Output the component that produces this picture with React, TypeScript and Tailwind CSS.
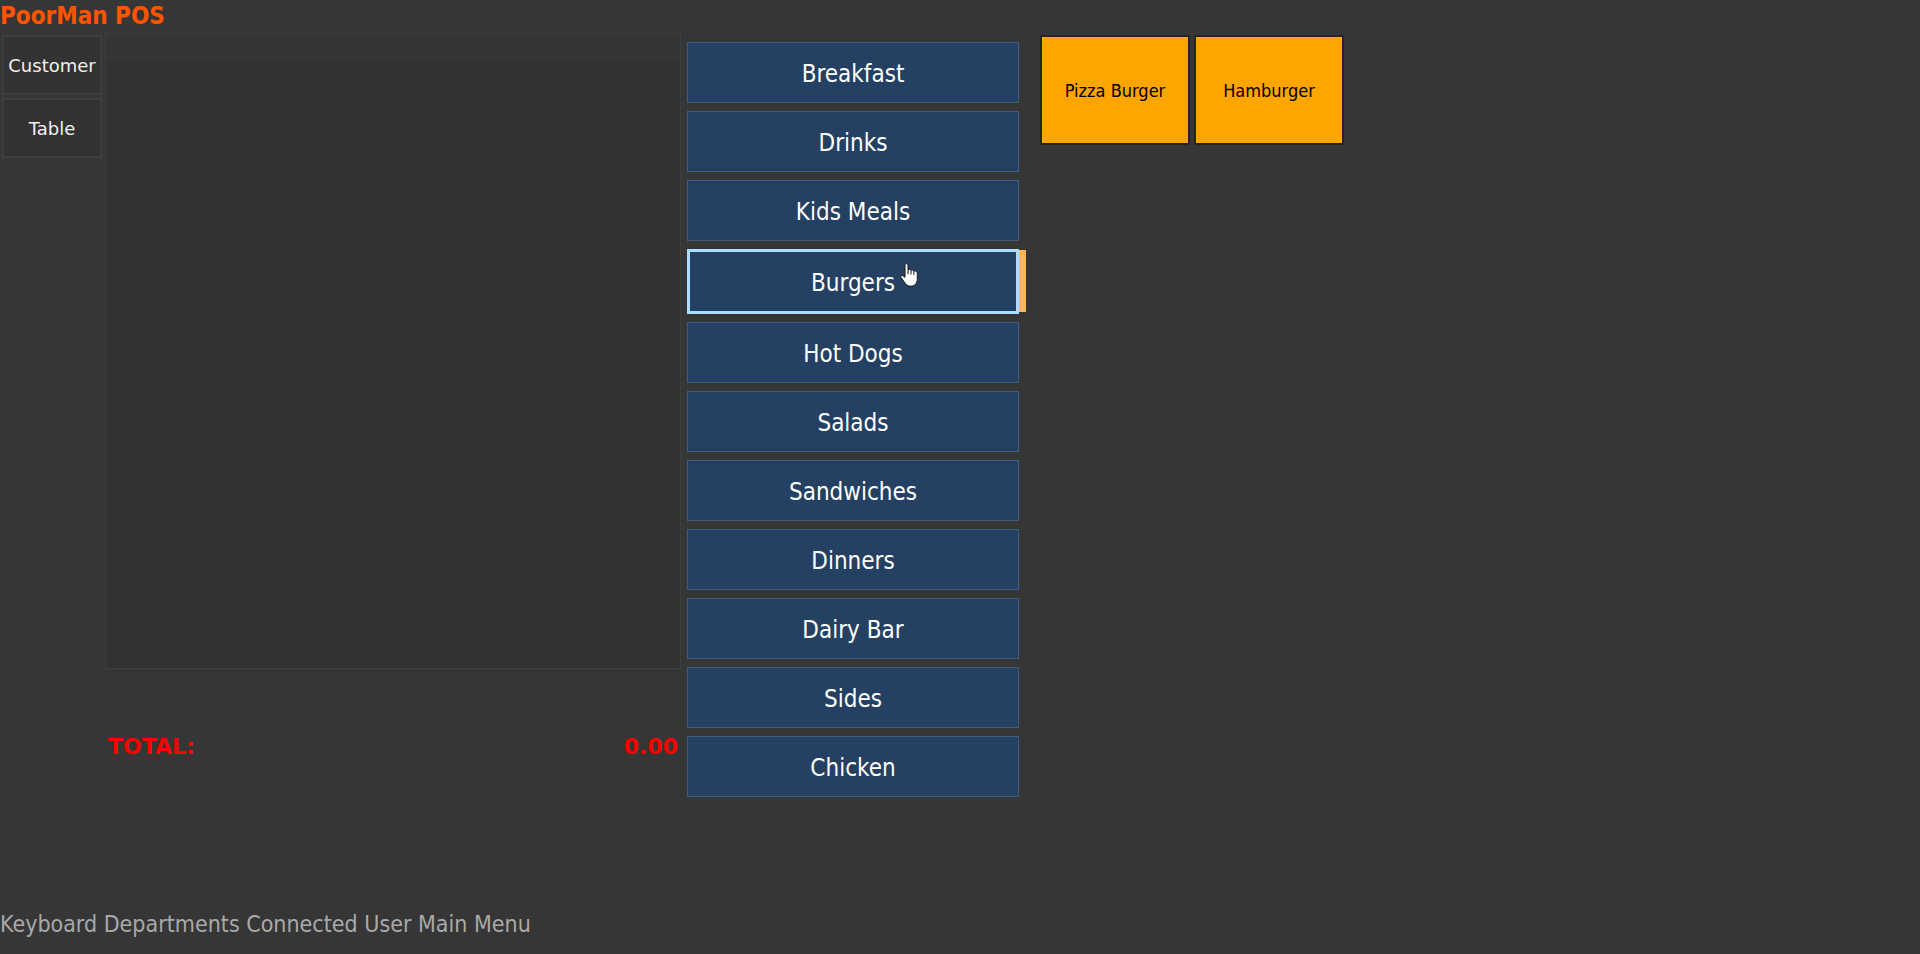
import { useState } from "react";

const categories = [
  "Breakfast",
  "Drinks",
  "Kids Meals",
  "Burgers",
  "Hot Dogs",
  "Salads",
  "Sandwiches",
  "Dinners",
  "Dairy Bar",
  "Sides",
  "Chicken",
];

const items = ["Pizza Burger", "Hamburger"];

function HandPointer() {
  return (
    <svg
      aria-hidden="true"
      viewBox="0 0 18 24"
      className="pointer-events-none absolute left-[213px] top-3.5 h-6 w-[18px]"
    >
      <path
        d="M5 2.200C5 1.200 5.700.6 6.500.6S8 1.200 8 2.200v4.600c.8-.7 2.500-.5 3 .5.800-.6 2.400-.3 2.900.7 1.600-.5 3.400.3 3.400 2.700v5.600c0 4-2.800 6.900-6.500 6.900-2.900 0-5-1.400-6.300-3.900L.8 14.300c-.5-1.300.9-2.400 2.100-1.600L5 14.300z"
        fill="#fff"
        stroke="#10151c"
        strokeWidth="1"
        strokeLinejoin="round"
      />
      <path d="M8 6.800v4.400M11 7.300v4.200M13.900 8v4" stroke="#10151c" strokeWidth="1" />
    </svg>
  );
}

export default function App() {
  const [active, setActive] = useState("Burgers");

  return (
    <div className="flex min-h-screen flex-col bg-[#363636] font-['DejaVu_Sans_Condensed','DejaVu_Sans',sans-serif]">
      <h1 className="h-[33px] text-2xl font-bold leading-[33px] text-[#ff5500]">PoorMan POS</h1>

      <main className="flex items-start">
        <nav className="flex w-[105px] shrink-0 flex-col gap-[3px] pl-0.5 pt-0.5 font-['DejaVu_Sans',sans-serif] text-lg text-[#f0f0f0]">
          <button className="h-[60px] w-[100px] border-2 border-[#3e3e3e] bg-[#323232] pt-0.5">Customer</button>
          <button className="h-[60px] w-[100px] border-2 border-[#3e3e3e] bg-[#323232] pt-0.5">Table</button>
        </nav>

        <section className="w-[30%] shrink-0">
          <div className="h-[636px] border border-[#3e3e3e] bg-[#323232]">
            <div className="h-[27px] bg-[#353535]" />
          </div>
          <div className="flex justify-between px-[3px] pt-[62px] font-['DejaVu_Sans',sans-serif] text-[22px] font-bold leading-8 text-[#ff0000]">
            <span>TOTAL:</span>
            <span>0.00</span>
          </div>
        </section>

        <div className="ml-1.5 flex shrink-0 flex-col gap-2 pt-[9px] text-2xl text-white">
          {categories.map((name) =>
            name === active ? (
              <div key={name} className="relative flex w-[339px] items-start">
                <button className="h-[65px] w-[332px] border-3 border-[#aaddff] bg-[#244062] pt-0.5">{name}</button>
                <span className="mt-px h-[62px] w-[7px] bg-[#ffb854]" />
                <HandPointer />
              </div>
            ) : (
              <button
                key={name}
                onClick={() => setActive(name)}
                className="h-[61px] w-[332px] border border-[#405c7b] bg-[#244062] pt-0.5"
              >
                {name}
              </button>
            ),
          )}
        </div>

        <section className="ml-3.5 flex flex-1 flex-wrap gap-1 pt-0.5 text-lg text-black">
          {items.map((name) => (
            <button key={name} className="h-[110px] w-[150px] border-2 border-[#242424] bg-[#ffa500] pt-0.5">
              {name}
            </button>
          ))}
        </section>
      </main>

      <footer className="mt-auto pb-3.5 text-[23px] leading-8 text-[#a9a9a9]">
        Keyboard Departments Connected User Main Menu
      </footer>
    </div>
  );
}
